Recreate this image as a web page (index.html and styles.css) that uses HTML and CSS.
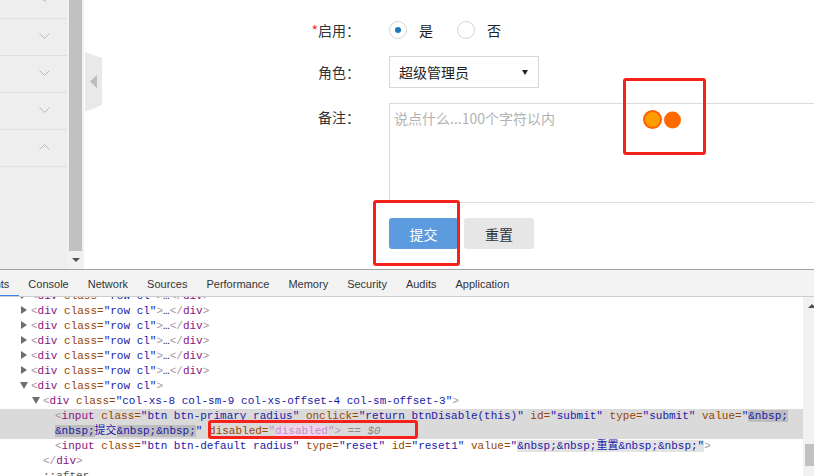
FILE: index.html
```html
<!DOCTYPE html>
<html lang="zh-CN">
<head>
    <meta charset="UTF-8">
    <meta name="viewport" content="width=device-width, initial-scale=1.0">
    <title>角色编辑</title>
    <link rel="stylesheet" href="styles.css">
</head>
<body>
    <div class="page">
        <aside class="sidebar">
            <div class="menu-item"><svg class="chev" width="11" height="6" viewBox="0 0 11 6"><polyline points="0.5,0.5 5.5,5.5 10.5,0.5"/></svg></div>
            <div class="menu-item"><svg class="chev" width="11" height="6" viewBox="0 0 11 6"><polyline points="0.5,0.5 5.5,5.5 10.5,0.5"/></svg></div>
            <div class="menu-item"><svg class="chev" width="11" height="6" viewBox="0 0 11 6"><polyline points="0.5,0.5 5.5,5.5 10.5,0.5"/></svg></div>
            <div class="menu-item"><svg class="chev" width="11" height="6" viewBox="0 0 11 6"><polyline points="0.5,0.5 5.5,5.5 10.5,0.5"/></svg></div>
            <div class="menu-item"><svg class="chev" width="11" height="6" viewBox="0 0 11 6"><polyline points="0.5,5.5 5.5,0.5 10.5,5.5"/></svg></div>
        </aside>
        <div class="vscroll">
            <div class="thumb"></div>
            <div class="sb-btn"><span class="arrow-down"></span></div>
        </div>
        <svg class="toggle" width="17" height="60" viewBox="0 0 17 60">
            <polygon points="0,0 17,6 17,53 0,60" fill="#e9e9e9"/>
            <polygon points="5,29.5 12,23 12,36" fill="#bcbcbc"/>
        </svg>
        <main class="content">
            <form class="form">
                <div class="row row-enable">
                    <label class="lbl"><span class="req">*</span>启用：</label>
                    <div class="opt"><span class="radio on"></span>是</div>
                    <div class="opt"><span class="radio"></span>否</div>
                </div>
                <div class="row row-role">
                    <label class="lbl">角色：</label>
                    <div class="select">超级管理员<span class="caret"></span></div>
                </div>
                <div class="row row-note">
                    <label class="lbl">备注：</label>
                    <textarea class="note" placeholder="说点什么...100个字符以内"></textarea>
                </div>
                <div class="row">
                    <span class="lbl"></span>
                    <button type="submit" class="btn btn-primary">提交</button>
                    <button type="reset" class="btn btn-default">重置</button>
                </div>
            </form>
        </main>
        <svg class="dots" width="42" height="22" viewBox="0 0 42 22">
            <circle cx="10.5" cy="10.5" r="8.5" fill="#ff9c00" stroke="#ff5f00" stroke-width="2"/>
            <circle cx="30.5" cy="11" r="8.5" fill="#ff6a00"/>
        </svg>
        <div class="mark mark-dots"></div>
        <div class="mark mark-btn"></div>
    </div>

    <div class="devtools">
        <div class="tabs">
            <div class="tab active">Elements</div>
            <div class="tab">Console</div>
            <div class="tab">Network</div>
            <div class="tab">Sources</div>
            <div class="tab">Performance</div>
            <div class="tab">Memory</div>
            <div class="tab">Security</div>
            <div class="tab">Audits</div>
            <div class="tab">Application</div>
        </div>
        <div class="panel">
            <div class="code">
                <div class="lines">
                    <div class="ln l1"><i class="tri r"></i><span class="br">&lt;</span><span class="tg">div</span> <span class="an">class=</span><span class="av">"row cl"</span><span class="br">&gt;</span>…<span class="br">&lt;/</span><span class="tg">div</span><span class="br">&gt;</span></div>
                    <div class="ln l1"><i class="tri r"></i><span class="br">&lt;</span><span class="tg">div</span> <span class="an">class=</span><span class="av">"row cl"</span><span class="br">&gt;</span>…<span class="br">&lt;/</span><span class="tg">div</span><span class="br">&gt;</span></div>
                    <div class="ln l1"><i class="tri r"></i><span class="br">&lt;</span><span class="tg">div</span> <span class="an">class=</span><span class="av">"row cl"</span><span class="br">&gt;</span>…<span class="br">&lt;/</span><span class="tg">div</span><span class="br">&gt;</span></div>
                    <div class="ln l1"><i class="tri r"></i><span class="br">&lt;</span><span class="tg">div</span> <span class="an">class=</span><span class="av">"row cl"</span><span class="br">&gt;</span>…<span class="br">&lt;/</span><span class="tg">div</span><span class="br">&gt;</span></div>
                    <div class="ln l1"><i class="tri r"></i><span class="br">&lt;</span><span class="tg">div</span> <span class="an">class=</span><span class="av">"row cl"</span><span class="br">&gt;</span>…<span class="br">&lt;/</span><span class="tg">div</span><span class="br">&gt;</span></div>
                    <div class="ln l1"><i class="tri r"></i><span class="br">&lt;</span><span class="tg">div</span> <span class="an">class=</span><span class="av">"row cl"</span><span class="br">&gt;</span>…<span class="br">&lt;/</span><span class="tg">div</span><span class="br">&gt;</span></div>
                    <div class="ln l1"><i class="tri d"></i><span class="br">&lt;</span><span class="tg">div</span> <span class="an">class=</span><span class="av">"row cl"</span><span class="br">&gt;</span></div>
                    <div class="ln l2"><i class="tri d"></i><span class="br">&lt;</span><span class="tg">div</span> <span class="an">class=</span><span class="av">"col-xs-8 col-sm-9 col-xs-offset-4 col-sm-offset-3"</span><span class="br">&gt;</span></div>
                    <div class="sel">
                        <div class="ln l3"><span class="br">&lt;</span><span class="tg">input</span> <span class="an">class=</span><span class="av">"btn btn-primary radius"</span> <span class="an">onclick=</span><span class="av">"return btnDisable(this)"</span> <span class="an">id=</span><span class="av">"submit"</span> <span class="an">type=</span><span class="av">"submit"</span> <span class="an">value=</span><span class="av">"<span class="en">&amp;nbsp;</span></span></div>
                        <div class="ln l3"><span class="av"><span class="en">&amp;nbsp;</span>提交<span class="en">&amp;nbsp;&amp;nbsp;</span>"</span> <span class="an">disabled=</span><span class="pale">"<span class="pk">disabled</span>"&gt;</span> <span class="dim">== <i>$0</i></span></div>
                    </div>
                    <div class="ln l3"><span class="br">&lt;</span><span class="tg">input</span> <span class="an">class=</span><span class="av">"btn btn-default radius"</span> <span class="an">type=</span><span class="av">"reset"</span> <span class="an">id=</span><span class="av">"reset1"</span> <span class="an">value=</span><span class="av">"<span class="lt">&amp;nbsp;&amp;nbsp;重置&amp;nbsp;&amp;nbsp;"</span></span><span class="br">&gt;</span></div>
                    <div class="ln l2"><span class="br">&lt;/</span><span class="tg">div</span><span class="br">&gt;</span></div>
                    <div class="ln l2 pseudo">::after</div>
                </div>
            </div>
            <div class="panel-scroll">
                <div class="sb-btn"><span class="arrow-up"></span></div>
                <div class="thumb2"></div>
            </div>
        </div>
        <div class="mark mark-attr"></div>
    </div>
</body>
</html>
```

FILE: styles.css
```css
body {
    margin: 0;
    width: 814px;
    height: 476px;
    overflow: hidden;
    background: #fff;
    color: #333;
    font-family: "Noto Sans CJK SC", sans-serif;
}

/* top page */
.page {
    position: relative;
    display: flex;
    height: 269px;
    overflow: hidden;
}
.sidebar {
    width: 67px;
    flex-shrink: 0;
    background: #eeeeee;
}
.menu-item {
    height: 33px;
    border-bottom: 1px solid #dfdfdf;
    display: flex;
    align-items: center;
    justify-content: flex-end;
    padding: 0 17px 3px 0;
}
.menu-item:first-child {
    margin-top: -18px;
}
.chev polyline {
    fill: none;
    stroke: #b8b8b8;
    stroke-width: 1;
}
.vscroll {
    width: 17px;
    flex-shrink: 0;
    background: #f1f1f1;
    display: flex;
    flex-direction: column;
}
.thumb {
    height: 251px;
    margin: 0 2px;
    background: #c1c1c1;
}
.sb-btn {
    height: 17px;
    display: flex;
    align-items: center;
    justify-content: center;
}
.arrow-down {
    border-left: 4px solid transparent;
    border-right: 4px solid transparent;
    border-top: 4px solid #505050;
}
.arrow-up {
    border-left: 4px solid transparent;
    border-right: 4px solid transparent;
    border-bottom: 4px solid #505050;
}
.toggle {
    flex-shrink: 0;
    margin: 52px 0 0 1px;
}
.content {
    flex: 1;
}

/* form */
.form {
    padding-top: 13px;
    font-size: 14px;
}
.row {
    display: flex;
    align-items: center;
}
.lbl {
    width: 287px;
    flex-shrink: 0;
    padding-right: 29px;
    box-sizing: border-box;
    text-align: right;
    color: #333;
}
.req {
    color: #e8322d;
}
.row-enable {
    height: 34px;
    margin-bottom: 9px;
}
.row-role {
    margin-bottom: 15px;
}
.row-note {
    align-items: flex-start;
    margin-bottom: 15px;
}
.row-note .lbl {
    padding-top: 4px;
    line-height: 20px;
}
.opt {
    display: flex;
    align-items: center;
    margin-right: 24px;
    color: #222;
}
.radio {
    width: 18px;
    height: 18px;
    box-sizing: border-box;
    border: 1px solid #d6d6d6;
    border-radius: 50%;
    display: flex;
    align-items: center;
    justify-content: center;
    margin-right: 12px;
}
.radio.on::after {
    content: "";
    width: 6px;
    height: 6px;
    border-radius: 50%;
    background: #1b79bf;
}
.select {
    width: 150px;
    height: 32px;
    box-sizing: border-box;
    border: 1px solid #d9d9d9;
    display: flex;
    align-items: center;
    justify-content: space-between;
    padding: 0 10px 0 9px;
    color: #222;
}
.caret {
    border-left: 3px solid transparent;
    border-right: 3px solid transparent;
    border-top: 5px solid #222;
}
.note {
    width: 500px;
    height: 100px;
    margin: 0;
    box-sizing: border-box;
    border: 1px solid #dcdcdc;
    padding: 4px;
    resize: none;
    font-family: "Noto Sans CJK SC", sans-serif;
    font-size: 14px;
    line-height: 20px;
}
.note::placeholder {
    color: #b2b2b2;
}
.btn {
    height: 31px;
    margin: 0;
    padding: 0;
    border: none;
    border-radius: 3px;
    font-family: "Noto Sans CJK SC", sans-serif;
    font-size: 14px;
}
.btn-primary {
    width: 69px;
    background: #5b9bde;
    color: #fff;
}
.btn-default {
    width: 70px;
    margin-left: 6px;
    background: #e6e6e6;
    color: #333;
}

/* annotations */
.dots {
    position: absolute;
    left: 642px;
    top: 109px;
}
.mark {
    position: absolute;
    box-sizing: border-box;
    border: 3px solid #f5221b;
    border-radius: 3px;
}
.mark-dots {
    left: 623px;
    top: 78px;
    width: 83px;
    height: 77px;
}
.mark-btn {
    left: 373px;
    top: 200px;
    width: 87px;
    height: 66px;
}
.mark-attr {
    left: 208px;
    top: 150px;
    width: 210px;
    height: 19px;
}

/* devtools */
.devtools {
    position: relative;
    border-top: 1px solid #a3a3a3;
}
.tabs {
    display: flex;
    height: 26px;
    margin-left: -46px;
    background: #f3f3f3;
    border-bottom: 1px solid #cdcdcd;
    font-family: "Liberation Sans", Arial, sans-serif;
    font-size: 11px;
    color: #333;
}
.tab {
    padding: 0 9.5px;
    line-height: 28px;
}
.tab.active {
    box-shadow: inset 0 -1px 0 #3b82f0;
}
.panel {
    display: flex;
    height: 179px;
    margin-right: -6px;
}
.code {
    flex: 1;
    overflow: hidden;
    font-family: "Liberation Mono", "Noto Sans CJK SC", monospace;
    font-size: 11px;
    line-height: 15px;
    color: #222;
}
.lines {
    margin-top: -8px;
}
.ln {
    height: 15px;
    white-space: pre;
}
.l1 { padding-left: 31px; }
.l2 { padding-left: 43px; }
.l3 { padding-left: 55px; }
.tri {
    display: inline-block;
    width: 0;
    height: 0;
    vertical-align: 0;
}
.tri.r {
    border-top: 4px solid transparent;
    border-bottom: 4px solid transparent;
    border-left: 6px solid #6e6e6e;
    margin: 0 4px 0 -10px;
}
.tri.d {
    border-left: 4px solid transparent;
    border-right: 4px solid transparent;
    border-top: 7px solid #6e6e6e;
    margin: 0 3px 0 -11px;
}
.sel {
    background: #dadada;
}
.br { color: #a894a6; }
.tg { color: #881280; }
.an { color: #994500; }
.av { color: #1a1aa6; }
.en { background: #bdbdbd; }
.lt { background: #e3e3e3; }
.pale { color: #b993bd; }
.pk { background: #f2d4ef; }
.dim { color: #8a8a8a; }
.pseudo { color: #555; }
.panel-scroll {
    width: 17px;
    flex-shrink: 0;
    background: #f1f1f1;
}
.thumb2 {
    height: 22px;
    margin: 130px 2px 0;
    background: #c1c1c1;
}
```
